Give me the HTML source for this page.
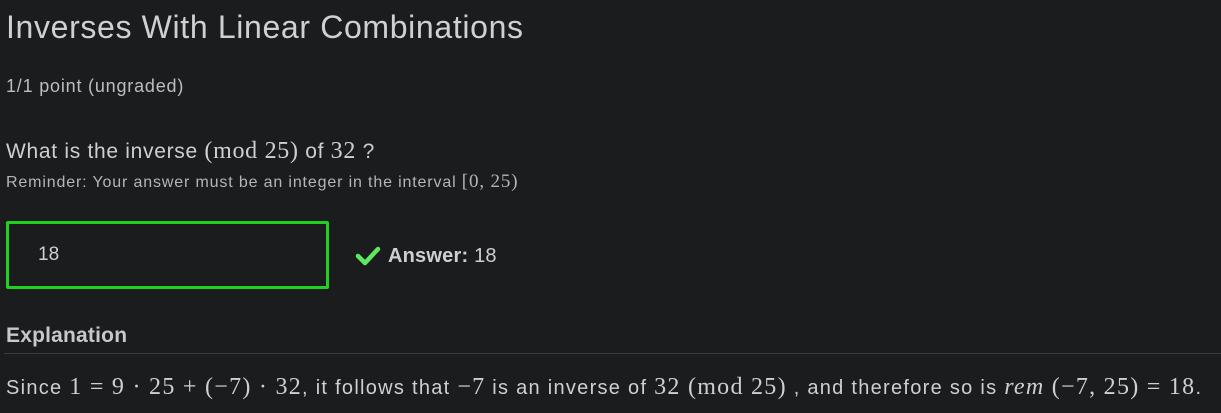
<!DOCTYPE html>
<html><head><style>
body{margin:0;background:#1b1c1e;color:#cfcfcf;font-family:"Liberation Sans",sans-serif;width:1221px;height:413px;overflow:hidden;position:relative}
.a{position:absolute;white-space:nowrap}
.m{font-family:"Liberation Serif",serif}
</style></head><body>
<div class="a" style="left:6px;top:9px;font-size:32px;color:#d0d0d0;letter-spacing:0.65px">Inverses With Linear Combinations</div>
<div class="a" style="left:6px;top:76px;font-size:18px;color:#bdbdbd;letter-spacing:0.8px">1/1 point (ungraded)</div>
<div class="a" style="left:6px;top:138px;font-size:21px;letter-spacing:0.7px">What is the inverse <span class="m" style="font-size:24px">(mod 25)</span> of <span class="m" style="font-size:24px">32</span> ?</div>
<div class="a" style="left:6px;top:171px;font-size:16px;color:#b5b5b5;letter-spacing:0.85px">Reminder: Your answer must be an integer in the interval <span class="m" style="font-size:19px">[0, 25)</span></div>
<div class="a" style="left:6px;top:221px;width:317px;height:62px;border:3px solid #1fd21f;border-radius:2px"></div>
<div class="a" style="left:38px;top:244px;font-size:19px;color:#d0d0d0">18</div>
<svg class="a" style="left:355px;top:246px" width="26" height="20" viewBox="0 0 26 20"><path d="M3 10 L10 17 L23 3" fill="none" stroke="#5ee85e" stroke-width="4.5" stroke-linecap="round" stroke-linejoin="round"/></svg>
<div class="a" style="left:388px;top:245px;font-size:20px;letter-spacing:0.2px"><b>Answer:</b> 18</div>
<div class="a" style="left:6px;top:324px;font-size:21px;font-weight:bold;color:#c8c8c8;letter-spacing:0.2px">Explanation</div>
<div class="a" style="left:4px;top:353px;width:1217px;height:1px;background:#3a3b3d"></div>
<div class="a" style="left:6px;top:374px;font-size:20px;letter-spacing:1.28px">Since <span class="m" style="font-size:24px">1 = 9 · 25 + (−7) · 32</span>, it follows that <span class="m" style="font-size:24px">−7</span> is an inverse of <span class="m" style="font-size:24px">32 (mod 25)</span> , and therefore so is <span class="m" style="font-size:24px"><i>rem</i> (−7, 25) = 18</span>.</div>
</body></html>
